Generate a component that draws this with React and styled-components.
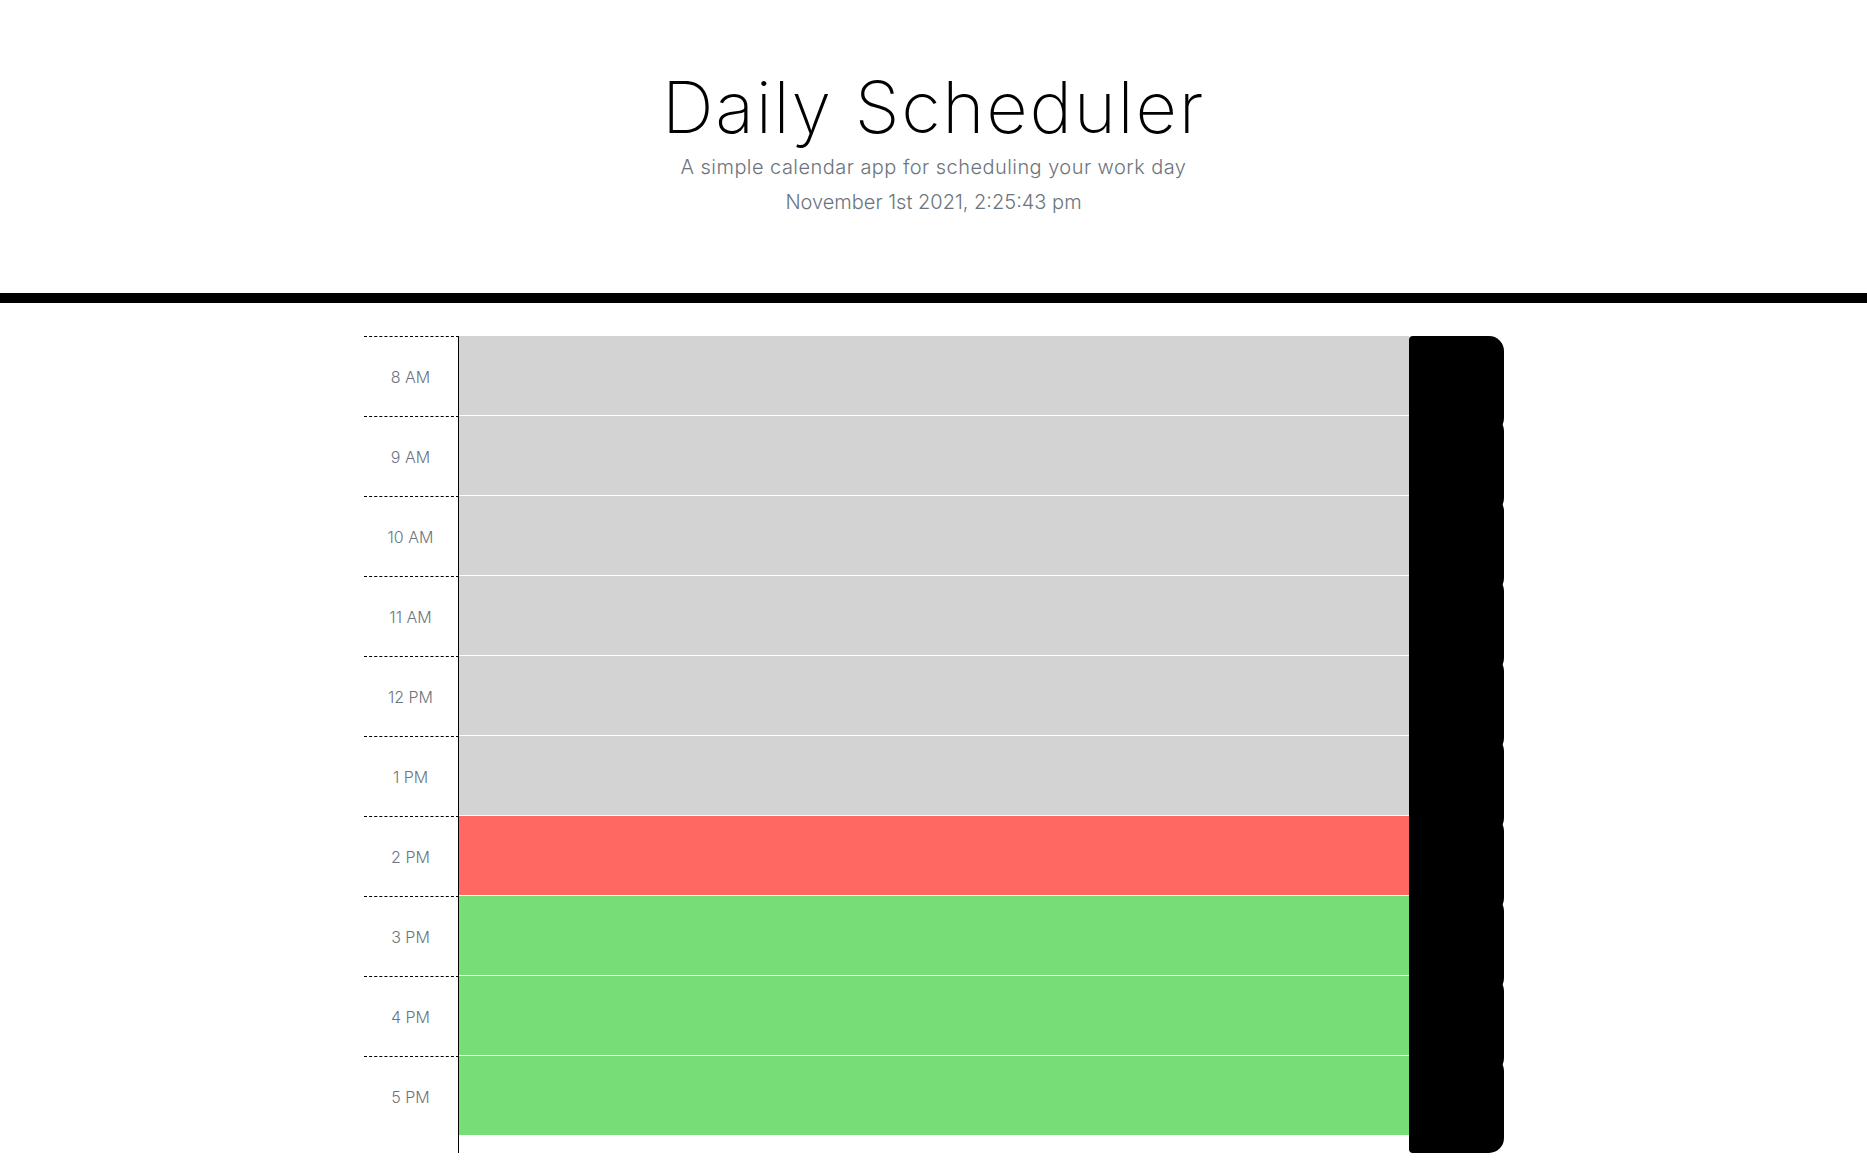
import React from "react";
import styled, { createGlobalStyle } from "styled-components";

const GlobalStyle = createGlobalStyle`
	* {
		box-sizing: border-box;
	}

	body {
		margin: 0;
		background: #fff;
		font-family: Inter, "Open Sans", sans-serif;
		color: #212529;
	}
`;

const hours = [8, 9, 10, 11, 12, 13, 14, 15, 16, 17];
const currentHour = 14;

const formatHour = (h) => {
	const suffix = h < 12 ? "AM" : "PM";
	const base = h % 12 === 0 ? 12 : h % 12;
	return `${base} ${suffix}`;
};

const tenseOf = (h) => {
	if (h < currentHour) return "past";
	if (h === currentHour) return "present";
	return "future";
};

const App = () => {
	return (
		<>
			<GlobalStyle />
			<Header>
				<Title>Daily Scheduler</Title>
				<Lead>A simple calendar app for scheduling your work day</Lead>
				<DateLine>November 1st 2021, 2:25:43 pm</DateLine>
			</Header>
			<Container>
				{hours.map((h) => (
					<Row key={h}>
						<Hour>{formatHour(h)}</Hour>
						<Description $tense={tenseOf(h)} />
						<SaveBtn aria-label="save" />
					</Row>
				))}
			</Container>
		</>
	);
};

export default App;

const Header = styled.header`
	display: flex;
	flex-direction: column;
	align-items: center;
	text-align: center;
	padding: 64px 32px 76px;
	border-bottom: 10px solid #000;
`;

const Title = styled.h1`
	margin: 0;
	font-size: 72px;
	line-height: 86px;
	font-weight: 200;
	letter-spacing: 1.7px;
	color: #000;
`;

const Lead = styled.p`
	margin: 2px 0 0;
	font-size: 20px;
	line-height: 30px;
	font-weight: 300;
	letter-spacing: 0.45px;
	color: #6c757d;
`;

const DateLine = styled(Lead)`
	margin-top: 5px;
	letter-spacing: 0;
`;

const Container = styled.main`
	width: 1140px;
	margin: 33px auto 0;
	padding-bottom: 28px;
`;

const Row = styled.div`
	display: flex;
	align-items: flex-start;
	height: 80px;
`;

const Hour = styled.div`
	flex: 0 0 95px;
	height: 97px;
	padding-bottom: 16px;
	display: flex;
	align-items: center;
	justify-content: center;
	border-top: 1px dashed #000;
	border-right: 1px solid #000;
	font-size: 16px;
	font-weight: 300;
	color: #6c757d;
`;

const tenseColors = {
	past: "#d3d3d3",
	present: "#ff6961",
	future: "#77dd77",
};

const Description = styled.textarea`
	flex: 0 0 950px;
	height: 80px;
	margin: 0;
	padding: 10px;
	border: none;
	border-bottom: 1px solid #fff;
	resize: none;
	outline: none;
	font-family: inherit;
	font-size: 16px;
	background: ${(p) => tenseColors[p.$tense]};
`;

const SaveBtn = styled.button`
	flex: 0 0 95px;
	height: 97px;
	margin: 0;
	padding: 0;
	border: none;
	border-radius: 4px 15px 15px 4px;
	background: #000;
	cursor: pointer;
`;
